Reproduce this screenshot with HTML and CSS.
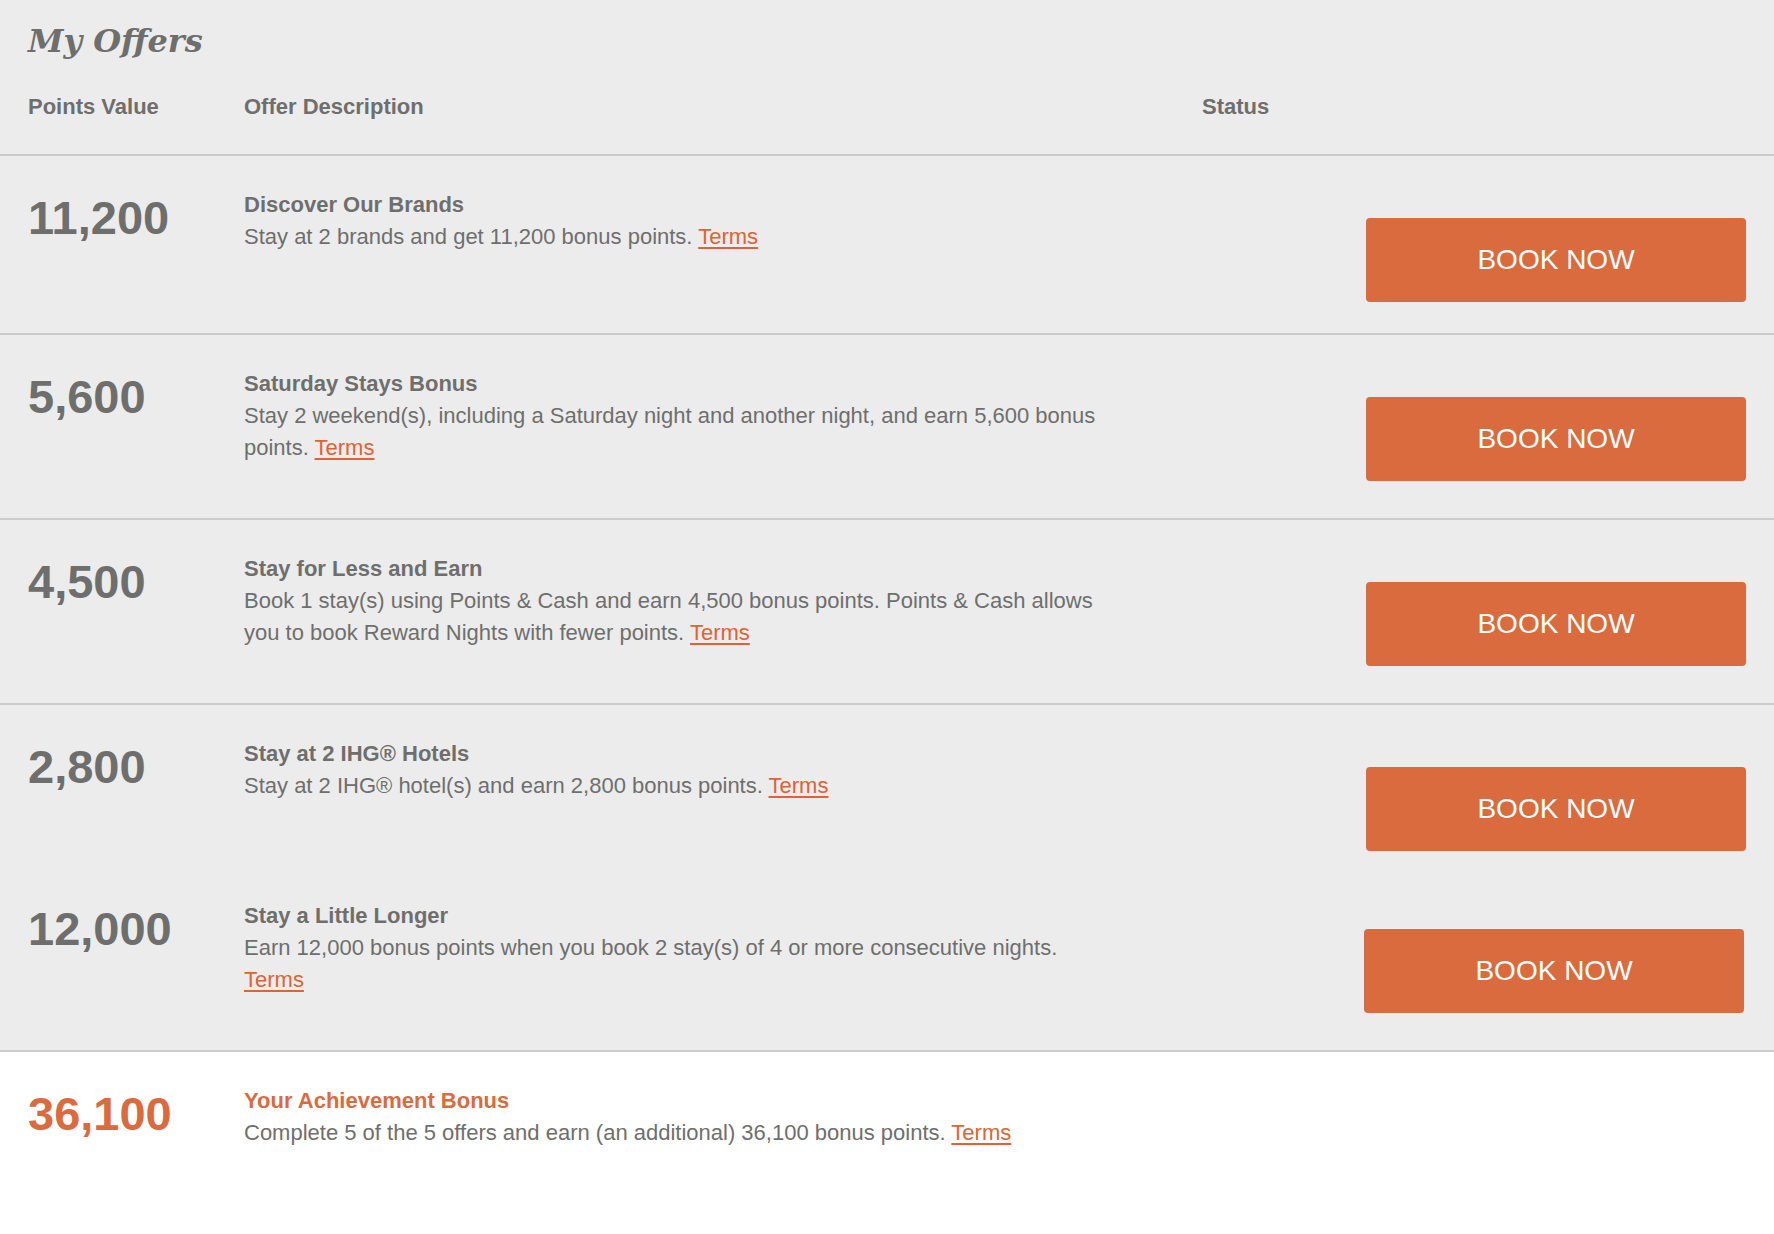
FILE: index.html
```html
<!DOCTYPE html>
<html lang="en">
<head>
<meta charset="utf-8">
<title>My Offers</title>
<link rel="stylesheet" href="styles.css">
</head>
<body>
<section class="offers">
  <h1 class="offers-title">My Offers</h1>
  <div class="offers-head">
    <div class="col-head">Points Value</div>
    <div class="col-head">Offer Description</div>
    <div class="col-head">Status</div>
  </div>

  <div class="offer">
    <div class="offer-points">11,200</div>
    <div class="offer-info">
      <div class="offer-name">Discover Our Brands</div>
      <p class="offer-desc">Stay at 2 brands and get 11,200 bonus points. <a class="terms" href="#">Terms</a></p>
    </div>
    <div class="offer-status"><a class="book-btn" href="#">BOOK NOW</a></div>
  </div>

  <div class="offer">
    <div class="offer-points">5,600</div>
    <div class="offer-info">
      <div class="offer-name">Saturday Stays Bonus</div>
      <p class="offer-desc">Stay 2 weekend(s), including a Saturday night and another night, and earn 5,600 bonus points. <a class="terms" href="#">Terms</a></p>
    </div>
    <div class="offer-status"><a class="book-btn" href="#">BOOK NOW</a></div>
  </div>

  <div class="offer">
    <div class="offer-points">4,500</div>
    <div class="offer-info">
      <div class="offer-name">Stay for Less and Earn</div>
      <p class="offer-desc">Book 1 stay(s) using Points &amp; Cash and earn 4,500 bonus points. Points &amp; Cash allows you to book Reward Nights with fewer points. <a class="terms" href="#">Terms</a></p>
    </div>
    <div class="offer-status"><a class="book-btn" href="#">BOOK NOW</a></div>
  </div>

  <div class="offer offer-open">
    <div class="offer-points">2,800</div>
    <div class="offer-info">
      <div class="offer-name">Stay at 2 IHG® Hotels</div>
      <p class="offer-desc">Stay at 2 IHG® hotel(s) and earn 2,800 bonus points. <a class="terms" href="#">Terms</a></p>
    </div>
    <div class="offer-status"><a class="book-btn" href="#">BOOK NOW</a></div>
  </div>

  <div class="offer offer-tight">
    <div class="offer-points">12,000</div>
    <div class="offer-info">
      <div class="offer-name">Stay a Little Longer</div>
      <p class="offer-desc">Earn 12,000 bonus points when you book 2 stay(s) of 4 or more consecutive nights. <a class="terms" href="#">Terms</a></p>
    </div>
    <div class="offer-status"><a class="book-btn book-btn-shift" href="#">BOOK NOW</a></div>
  </div>
</section>

<section class="bonus">
  <div class="offer offer-bonus">
    <div class="offer-points">36,100</div>
    <div class="offer-info">
      <div class="offer-name">Your Achievement Bonus</div>
      <p class="offer-desc">Complete 5 of the 5 offers and earn (an additional) 36,100 bonus points. <a class="terms" href="#">Terms</a></p>
    </div>
    <div class="offer-status"></div>
  </div>
</section>
</body>
</html>
```

FILE: styles.css
```css
html, body {
  margin: 0;
  padding: 0;
  background: #ffffff;
}

body {
  font-family: "Liberation Sans", Arial, Helvetica, sans-serif;
  color: #6e6f6d;
}

.offers {
  background: #ececec;
}

.offers-title {
  margin: 0;
  padding: 21px 28px 0;
  font-family: "DejaVu Serif", "Liberation Serif", Georgia, serif;
  font-style: italic;
  font-weight: bold;
  font-size: 32px;
  line-height: 40px;
  color: #6e6f6d;
}

.offers-head {
  display: grid;
  grid-template-columns: 216px 958px 1fr;
  padding: 30px 28px 31px;
  border-bottom: 2px solid #cbcbcb;
}

.col-head {
  font-size: 22px;
  font-weight: bold;
  line-height: 32px;
}

.offer {
  display: grid;
  grid-template-columns: 216px 958px 1fr;
  padding: 33px 28px 0;
  border-bottom: 2px solid #cbcbcb;
}

.offer-open {
  border-bottom: none;
}

.offer-tight {
  padding-top: 18px;
}

.offer-points {
  font-size: 47px;
  font-weight: bold;
  line-height: 58px;
}

.offer-info {
  padding-bottom: 54px;
}

.offer-name {
  font-size: 22px;
  font-weight: bold;
  line-height: 32px;
}

.offer-desc {
  margin: 0;
  max-width: 862px;
  font-size: 22px;
  line-height: 32px;
}

.terms {
  color: #df6335;
  text-decoration: underline;
  text-underline-offset: 3px;
}

.offer-status {
  display: flex;
  justify-content: flex-end;
  align-items: flex-start;
}

.book-btn {
  display: flex;
  align-items: center;
  justify-content: center;
  width: 380px;
  height: 84px;
  margin: 29px 0 31px;
  background: #d96b3f;
  border-radius: 4px;
  color: #ffffff;
  font-size: 28px;
  text-decoration: none;
}

.book-btn-shift {
  margin-right: 2px;
}

.bonus {
  background: #ffffff;
}

.offer-bonus {
  border-bottom: none;
}

.offer-bonus .offer-points,
.offer-bonus .offer-name {
  color: #d96b3f;
}
```
